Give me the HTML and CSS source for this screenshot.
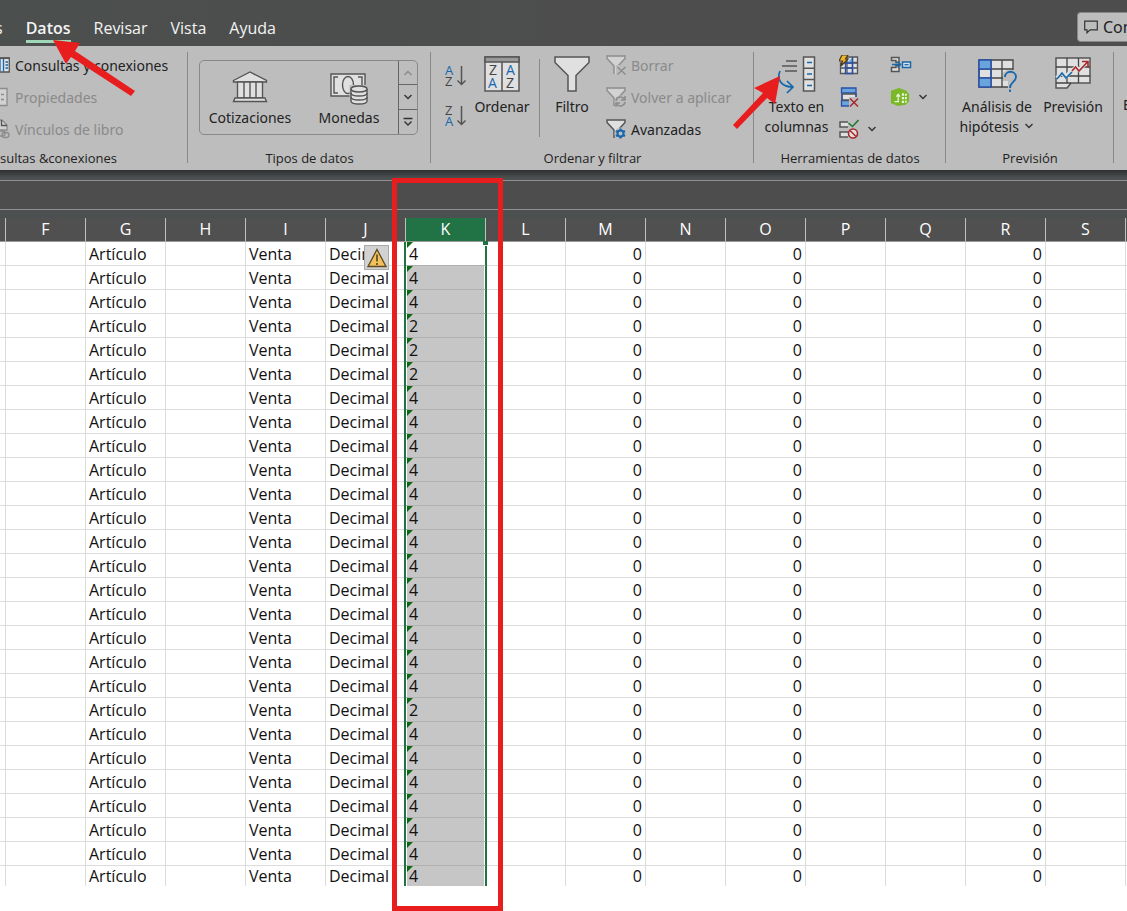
FILE: index.html
```html
<!DOCTYPE html>
<html lang="es">
<head>
<meta charset="utf-8">
<title>Datos</title>
<link rel="stylesheet" href="styles.css">
</head>
<body>
<header class="tabs">
  <nav class="tab-list">
    <a class="tab" href="#f">s</a>
    <a class="tab active" href="#datos">Datos</a>
    <a class="tab" href="#revisar">Revisar</a>
    <a class="tab" href="#vista">Vista</a>
    <a class="tab" href="#ayuda">Ayuda</a>
  </nav>
  <button class="comments" type="button">
    <svg width="14" height="14" viewBox="0 0 14 14" fill="none" stroke="#333" stroke-width="1.2"><path d="M.7 1.2h12.6v8.6H6L3 12.8V9.8H.7z"/></svg>
    <span>Comentarios</span>
  </button>
</header>

<section class="ribbon">
  <div class="group">
    <div class="tools">
      <div class="list first">
        <button type="button" class="row"><svg width="10" height="20" viewBox="0 0 10 20"><path d="M-4 3H9.300V17H-4z" fill="#e0e0e0" stroke="#555" stroke-width="1.300"/><path d="M-4 2.500H10V4H-4z" fill="#555"/><path d="M3.500 4v12.500M0 4v12.500" stroke="#1767ad" stroke-width="1.300"/><path d="M5.500 7H8M5.500 10H8M5.500 13H8" stroke="#1767ad" stroke-width="1.400"/></svg>Consultas y conexiones</button>
        <button type="button" class="row" disabled><svg width="10" height="20" viewBox="0 0 10 20"><path d="M-4 1.500H7V18.500H-4z" fill="#d2d2d2" stroke="#8c8c8c" stroke-width="1.300"/><path d="M1 7.500h3M1 12.500h3" stroke="#8c8c8c" stroke-width="1.500"/></svg>Propiedades</button>
        <button type="button" class="row" disabled><svg width="10" height="20" viewBox="0 0 10 20" fill="none" stroke="#8c8c8c" stroke-width="1.300"><path d="M-4 1H2l5 5v5H-4z" fill="#d2d2d2"/><path d="M1.500 1v5.500H7" stroke="#555"/><rect x="-3" y="12" width="8" height="5" rx="2.500"/><rect x="2" y="13.500" width="7" height="5" rx="2.500"/></svg>Vínculos de libro</button>
      </div>
    </div>
    <div class="label left">sultas &amp;conexiones</div>
  </div>

  <div class="group">
    <div class="tools">
      <div class="gallery">
        <button type="button" class="item">
          <svg width="36" height="32" viewBox="0 0 36 32" fill="#e0e0e0" stroke="#555" stroke-width="1.400"><path d="M1.500 9.500L18 1l16.500 8.500v1.500H1.500z"/><path d="M5.500 11h25v16h-25z"/><path d="M12 11v16M18 11v16M24 11v16"/><path d="M3 27h30l1.500 3.500H1.500z"/></svg>
          Cotizaciones</button>
        <button type="button" class="item">
          <svg width="38" height="34" viewBox="0 0 38 34" fill="#e0e0e0" stroke="#555" stroke-width="1.400"><path d="M1 3h34v22H1z"/><path d="M8 6H4v16h4M28 6h4v10" fill="none"/><ellipse cx="18" cy="14" rx="5.500" ry="8.500"/><path d="M19.500 14h18v19h-18z" fill="#bdbdbd" stroke="none"/><path d="M21 18v12c0 4 16 4 16 0V18"/><path d="M21 22c0 4 16 4 16 0M21 26c0 4 16 4 16 0" fill="none"/><ellipse cx="29" cy="18" rx="8" ry="3"/></svg>
          Monedas</button>
        <div class="spin">
          <button type="button" aria-label="Anterior" disabled><svg width="10" height="8" viewBox="0 0 10 8"><path d="M1.500 6L5 2.500 8.500 6"/></svg></button>
          <button type="button" aria-label="Siguiente"><svg width="10" height="8" viewBox="0 0 10 8"><path d="M1.500 2L5 5.500 8.500 2"/></svg></button>
          <button type="button" aria-label="Más"><svg width="10" height="10" viewBox="0 0 10 10"><path d="M.5 1.500h9M1.500 4.500L5 8l3.500-3.500"/></svg></button>
        </div>
      </div>
    </div>
    <div class="label">Tipos de datos</div>
  </div>

  <div class="group">
    <div class="tools">
      <div class="sorts">
        <button type="button" aria-label="Ordenar de A a Z"><svg width="22" height="24" viewBox="0 0 22 24"><text x="0" y="11" class="ltr blue">A</text><text x="0" y="22" class="ltr">Z</text><path class="arrow" d="M16.500 2v18.500M12.500 16.500l4 4 4-4"/></svg></button>
        <button type="button" aria-label="Ordenar de Z a A"><svg width="22" height="24" viewBox="0 0 22 24"><text x="0" y="11" class="ltr">Z</text><text x="0" y="22" class="ltr blue">A</text><path class="arrow" d="M16.500 2v18.500M12.500 16.500l4 4 4-4"/></svg></button>
      </div>
      <button type="button" class="big sort"><svg width="36" height="36" viewBox="0 0 36 36"><path d="M1 1h34v34H1z" fill="#e0e0e0" stroke="#555" stroke-width="1.500"/><path d="M1 1h34v5H1z" fill="#999" stroke="#555" stroke-width="1.500"/><path d="M18 6v29" stroke="#555" stroke-width="1.500"/><text x="5" y="19" class="ltr g">Z</text><text x="4" y="32" class="ltr g blue">A</text><text x="22" y="19" class="ltr g blue">A</text><text x="22" y="32" class="ltr g">Z</text></svg>Ordenar</button>
      <i class="rule"></i>
      <button type="button" class="big filter"><svg width="36" height="36" viewBox="0 0 36 36"><path d="M1 1h34v5.500L22 19.500V35h-8V19.500L1 6.500z" fill="#e0e0e0" stroke="#555" stroke-width="1.500"/></svg>Filtro</button>
      <div class="list">
        <button type="button" class="row" disabled><svg width="20" height="20" viewBox="0 0 20 20" fill="none" stroke="#8c8c8c" stroke-width="1.400"><path d="M8 19V11L1 3.500V1h18v2.500L12 11v8" fill="#d2d2d2"/><path d="M10 10h10v10H10z" fill="#bdbdbd" stroke="none"/><path d="M11.500 12l8 7.500M19.500 12l-8 7.500"/></svg>Borrar</button>
        <button type="button" class="row" disabled><svg width="20" height="20" viewBox="0 0 20 20" fill="none" stroke="#8c8c8c" stroke-width="1.400"><path d="M8 19V11L1 3.500V1h18v2.500L13 10" fill="#d2d2d2"/><circle cx="14.500" cy="14.500" r="6" fill="#bdbdbd" stroke="none"/><path d="M10 14a4.500 4.500 0 0 1 8.500-1.500M19 9v4h-4M19 15a4.500 4.500 0 0 1-8.500 1.500M10 20v-4h4" stroke-width="1.600"/></svg>Volver a aplicar</button>
        <button type="button" class="row"><svg width="20" height="20" viewBox="0 0 20 20" fill="none" stroke="#555" stroke-width="1.500"><path d="M8 19V11L1 3.500V1h18v2.500L13 10" fill="#e0e0e0"/><circle cx="14.500" cy="14.500" r="6" fill="#bdbdbd" stroke="none"/><circle cx="14.500" cy="14.500" r="3" stroke="#1767ad" stroke-width="2"/><path d="M14.500 9.500v2M14.500 17.500v2M10 12l2 1M17 16l2 1M10 17l2-1M17 13l2-1" stroke="#1767ad" stroke-width="2.200"/></svg>Avanzadas</button>
      </div>
    </div>
    <div class="label">Ordenar y filtrar</div>
  </div>

  <div class="group">
    <div class="tools">
      <button type="button" class="big split"><svg width="38" height="36" viewBox="0 0 38 36" fill="none" stroke="#555" stroke-width="1.500"><path d="M8 5h11M4 10h15M7 15h12"/><path d="M25.500 1h11v34h-11zM25.500 12.300h11M25.500 23.600h11" fill="#e0e0e0"/><path d="M29 6.500h5M29 18h5M29 29.500h5M2 15c-4 9 2 16 13 16M9 25l6 6-6 6" stroke="#1767ad" stroke-width="1.700"/></svg>Texto en columnas</button>
      <div class="pair">
        <button type="button" aria-label="Relleno rápido"><svg width="20" height="20" viewBox="0 0 20 20"><path d="M1.500 8h17v10.500h-17zM8 2h10.500v16.500H8z" fill="#e0e0e0" stroke="#555" stroke-width="1.300"/><path d="M1.500 13h17M13.500 2v16.500M8 7.500h10.500" stroke="#555" stroke-width="1.300"/><path d="M8 8L14 2v6z" fill="#69a5dc"/><path d="M6.500 8h7v10.500h-7zM6.500 13h7M13.500 2v6" fill="none" stroke="#2850a8" stroke-width="1.400"/><path d="M3 0h6L6.500 4H9L2 11l1.500-5H0z" fill="#f0b82e" stroke="#4a3920" stroke-width="1.200"/></svg></button>
        <button type="button" aria-label="Consolidar"><svg width="22" height="20" viewBox="0 0 22 20"><path d="M1.500 2.500h7.500v5H6v-2H1.500zM1.500 12.500H6v-2h3v6H1.500z" fill="#e0e0e0" stroke="#555" stroke-width="1.500"/><path d="M2 9.500h8M7.500 6.500l3 3-3 3" stroke="#1767ad" stroke-width="1.500" fill="none"/><path d="M12.500 7h8v5.500h-8z" fill="#e0e0e0" stroke="#1767ad" stroke-width="1.500"/><path d="M14.500 9.700h4" stroke="#1767ad" stroke-width="1.300"/></svg></button>
        <button type="button" aria-label="Quitar duplicados"><svg width="20" height="20" viewBox="0 0 20 20"><path d="M2.500 1H17v5H2.500zM2.500 13.500H12V19H2.500z" fill="#69a5dc" stroke="#2850a8" stroke-width="1.300"/><path d="M3 7h14v6H3z" fill="#e0e0e0" stroke="#555" stroke-width="1.300"/><path d="M3 7v6M17 6v5" stroke="#2850a8" stroke-width="1.300"/><path d="M10 10h10v10H10z" fill="#bdbdbd"/><path d="M11 11.500l8 8M19 11.500l-8 8" stroke="#a8292c" stroke-width="1.500"/></svg></button>
        <button type="button" aria-label="Modelo de datos"><svg width="20" height="20" viewBox="0 0 22 20"><path d="M10 0l8 3 3 4v8l-4 3.500L9 20l-8-3V3z" fill="#7ab829"/><path d="M9 15V7.500M7 9.500l2-2.500 2 2.500M5 15h5" stroke="#e8f5d8" fill="none" stroke-width="1.400"/><path d="M13 6h2.500v2.500H13zM16.500 6.500h2v2h-2zM13 10h2.500v2.500H13zM16.500 10h2v2.500h-2zM13 14h2.500v2.500H13zM16.500 14h2v2h-2z" fill="#e8f5d8"/></svg><svg class="chev" width="10" height="8" viewBox="0 0 10 8"><path d="M1.500 2L5 5.500 8.500 2"/></svg></button>
        <button type="button" aria-label="Validación de datos"><svg width="20" height="20" viewBox="0 0 20 20" fill="none"><path d="M9 3H1v5h8M9 13H1v5h8" fill="#e0e0e0" stroke="#555" stroke-width="1.500"/><path d="M9.500 4l4 3.500L19.500 1" stroke="#26782e" stroke-width="1.600"/><circle cx="14" cy="14.500" r="4.500" fill="#e0e0e0" stroke="#a8292c" stroke-width="1.600"/><path d="M11 11.500l6 6" stroke="#a8292c" stroke-width="1.600"/></svg><svg class="chev" width="10" height="8" viewBox="0 0 10 8"><path d="M1.500 2L5 5.500 8.500 2"/></svg></button>
      </div>
    </div>
    <div class="label">Herramientas de datos</div>
  </div>

  <div class="group">
    <div class="tools">
      <button type="button" class="big whatif"><svg width="40" height="36" viewBox="0 0 40 36"><path d="M2 4h34v27H2z" fill="#e0e0e0"/><path d="M2 4h34v27H2zM14 4v27M25 4v27M2 13h34M2 22h34" fill="none" stroke="#444" stroke-width="1.300"/><path d="M2 4h12v9H2zM2 22h12v9H2z" fill="#69a5dc" stroke="#2850a8" stroke-width="1.500"/><path d="M2 13v9M14 13v9" stroke="#2850a8" stroke-width="1.500"/><path d="M26 17l4-3h10v22h-9V25h-5z" fill="#bdbdbd"/><path d="M28 21c0-7 11-7 11 0 0 5-6 5-6 11M33 33.500V36" fill="none" stroke="#1767ad" stroke-width="1.800"/></svg><span>Análisis de<br>hipótesis <svg class="chev in" width="10" height="8" viewBox="0 0 10 8"><path d="M1.500 2L5 5.500 8.500 2"/></svg></span></button>
      <button type="button" class="big forecast"><svg width="36" height="36" viewBox="0 0 36 36"><path d="M1 2h34v25H16l-4 5H1z" fill="#e0e0e0" stroke="#555" stroke-width="1.500"/><path d="M1 11h34M1 20h34M1 27h15M12 2v25M23.500 2v25" stroke="#444" stroke-width="1.300"/><path d="M2 22l4.500-6 4 5 6-6M17 15l4-4 3 3 8-8" fill="none" stroke="#e0e0e0" stroke-width="4"/><path d="M2 23l5-6 4 5 6-6" fill="none" stroke="#1767ad" stroke-width="1.600"/><path d="M17 15l3.500-4 3.500 4 8.500-9M27 5.500h6v6" fill="none" stroke="#a8292c" stroke-width="1.600"/></svg>Previsión</button>
    </div>
    <div class="label">Previsión</div>
  </div>

  <div class="group last">
    <div class="tools"><button type="button" class="big outline">Esquema</button></div>
  </div>
  <svg class="pointer one" width="83" height="58" viewBox="0 0 83 58"><path d="M0 1l27 3-5 8 60 40-4 5-60-39-5 7z" fill="#e81e1e"/></svg>
  <svg class="pointer two" width="48" height="56" viewBox="0 0 48 56"><path d="M47 1L42 29l-8-6L4 54l-4-4 30-32-9-5z" fill="#e81e1e"/></svg>
</section>

<div class="formula"><input class="field" type="text" aria-label="Barra de fórmulas"></div>

<main class="sheet">
  <table class="grid">
    <colgroup><col class="stub"><col span="14" class="c"><col></colgroup>
    <thead><tr id="head"></tr></thead>
    <tbody id="rows"></tbody>
  </table>
  <i class="handle"></i>
  <button class="warn" type="button" aria-label="Error en la celda"><svg width="20" height="20" viewBox="0 0 20 20"><path d="M10 1.500L19 18.500H1z" fill="#f3c05a" stroke="#5a4a25" stroke-width="1.300"/><path d="M10 6.500v7M10 15v2" stroke="#4a3d20" stroke-width="1.500"/></svg></button>
  <i class="frame"></i>
</main>
<script src="sheet.js"></script>
</body>
</html>
```
FILE: styles.css
```css
* { box-sizing: border-box; }
body { margin: 0; min-height: 100vh; background: #fff; color: #222; font-family: "Noto Sans", "Open Sans", sans-serif; font-size: 14px; overflow: hidden; }
button { font: inherit; color: inherit; background: none; border: 0; padding: 0; margin: 0; }
button:disabled { color: #8a8a8a; }
svg { display: block; flex: none; }

.tabs { display: flex; justify-content: space-between; height: 46px; background: linear-gradient(90deg, #4b4f4d, #4d4d4d 60%); }
.tab-list { display: flex; gap: 23px; padding-top: 16px; margin-left: -5px; }
.tab { color: #f4f4f4; text-decoration: none; font-family: "Open Sans", sans-serif; font-size: 16px; line-height: 24px; height: 27px; }
.active { font-weight: 600; border-bottom: 3px solid #9fd8b8; }
.comments { display: flex; align-items: center; gap: 5px; width: 50px; height: 30px; margin-top: 12px; padding-left: 6px; border: 1px solid #888; border-right: 0; border-radius: 4px 0 0 4px; background: #bdbdbd; overflow: hidden; font-size: 16px; }

.ribbon { position: relative; display: grid; grid-template-columns: 188px 243px 323px 192px 168px 1fr; height: 124px; background: #bdbdbd; }
.group { display: grid; grid-template-rows: 100px 24px; position: relative; min-width: 0; }
.group:not(.last)::after { content: ""; position: absolute; right: 0; top: 6px; bottom: 7px; width: 1px; background: #888; }
.last { overflow: hidden; }
.tools { display: flex; align-items: flex-start; padding-top: 3px; min-width: 0; }
.label { text-align: center; font-family: "Open Sans", sans-serif; font-size: 13px; line-height: 24px; white-space: nowrap; }
.label.left { text-align: left; }
.list { display: flex; flex-direction: column; padding-left: 8px; }
.list.first { padding-left: 0; }
.row { display: flex; align-items: center; gap: 5px; height: 32px; white-space: nowrap; }

.gallery { display: grid; grid-template-columns: 100px 1fr 19px; width: 219px; height: 75px; margin: 11px 0 0 11px; border: 1px solid #888; border-radius: 5px; overflow: hidden; }
.item { display: flex; flex-direction: column; align-items: center; justify-content: space-between; padding: 10px 0 6px; line-height: 20px; }
.spin { display: grid; grid-template-rows: repeat(3, 1fr); border-left: 1px solid #666; }
.spin button { display: grid; place-items: center; border-bottom: 1px solid #666; }
.spin button:last-child { border-bottom: 0; }
.spin path, .chev path { fill: none; stroke: #333; stroke-width: 1.4; }
.spin button:disabled path { stroke: #888; }

.sorts { display: flex; flex-direction: column; gap: 16px; width: 40px; padding: 15px 0 0 14px; }
.ltr { font: 500 13px "Open Sans", sans-serif; fill: #444; }
.g { font-size: 14px; }
.blue { fill: #1767ad; }
.arrow { fill: none; stroke: #555; stroke-width: 1.5; }
.big { display: flex; flex-direction: column; align-items: center; gap: 5px; padding-top: 7px; line-height: 20px; white-space: nowrap; }
.sort { width: 62px; }
.filter { width: 52px; }
.rule { width: 1px; height: 78px; margin: 10px 6px 0; background: #888; }
.split { width: 85px; white-space: normal; }
.split svg { overflow: visible; }
.pair { display: grid; grid-template-columns: 51px 36px; grid-auto-rows: 32px; }
.pair button { display: flex; align-items: center; gap: 8px; }
.whatif { width: 94px; margin-left: 4px; }
.chev.in { display: inline-block; margin-left: 2px; vertical-align: 2px; }
.forecast { width: 58px; }
.outline { margin-left: 9px; padding-top: 46px; }
.pointer { position: absolute; }
.one { left: 53px; top: -7px; }
.two { left: 733px; top: 29px; }

.formula { height: 48px; padding-top: 10px; background: linear-gradient(#2e3030, #4c5050 8px); }
.field { display: block; width: 100%; height: 30px; background: #4d4d4d; border: solid #909090; border-width: 1px 0; border-radius: 0; color: #fff; outline: 0; }

.sheet { position: relative; }
.grid { width: 100%; table-layout: fixed; border-collapse: separate; border-spacing: 0; font-family: "Open Sans", sans-serif; font-size: 16px; }
.stub { width: 6px; }
.c { width: 80px; }
.grid th { height: 24px; padding: 0 0 1px; background: #505050; color: #fff; font-weight: 400; line-height: 22px; border-right: 1px solid #c0c0c0; border-bottom: 1px solid #999; }
.grid td { height: 24px; padding: 0 3px; line-height: 22px; white-space: nowrap; color: #111; border-right: 1px solid #dcdcdc; border-bottom: 1px solid #dcdcdc; }
.grid tr > :last-child { border-right: 0; padding: 0; }
.grid tr > :first-child { padding: 0; }
.grid tbody tr:last-child td { height: 20px; line-height: 20px; border-bottom: 0; }
.num { text-align: right; }
.grid th.k { background: #217346; }
.grid td.k { position: relative; background: #c6c6c6; border-color: #b0b0b0; border-right: 1px solid #217346; box-shadow: -2px 0 #217346, 1px 0 #217346, inset 1px 0 #fff, inset -1px 0 #fff; }
.grid tbody tr:first-child td.k { background: #fff; }
.k span::before { content: ""; position: absolute; left: 1px; top: 0; border: solid transparent; border-width: 0 6px 6px 0; border-top: 6px solid #0a6b0a; border-bottom: 0; }
.handle { position: absolute; left: 483px; top: 23px; width: 5px; height: 5px; background: #217346; border-bottom: 1px solid #fff; }
.warn { position: absolute; left: 364px; top: 27px; width: 25px; height: 25px; display: grid; place-items: center; background: #d2d2d2; border: 1px solid #aaa; }
.frame { position: absolute; left: 392px; top: -40px; width: 111px; height: 733px; border: 5px solid #e81e1e; }
```
FILE: sheet.js
```js
const columns = ["", "F", "G", "H", "I", "J", "K", "L", "M", "N", "O", "P", "Q", "R", "S", ""];
const text = { G: "Artículo", I: "Venta", J: "Decimal" };
const twos = [3, 4, 5, 19];

document.getElementById("head").innerHTML = columns
  .map(c => `<th${c === "K" ? ' class="k"' : ""}>${c}</th>`).join("");

const rows = [];
for (let r = 0; r < 27; r++) {
  rows.push("<tr>" + columns.map(c => {
    if (c === "K") return `<td class="k"><span>${twos.includes(r) ? 2 : 4}</span></td>`;
    if ("MOR".includes(c) && c) return '<td class="num">0</td>';
    return `<td>${text[c] || ""}</td>`;
  }).join("") + "</tr>");
}
document.getElementById("rows").innerHTML = rows.join("");
```
